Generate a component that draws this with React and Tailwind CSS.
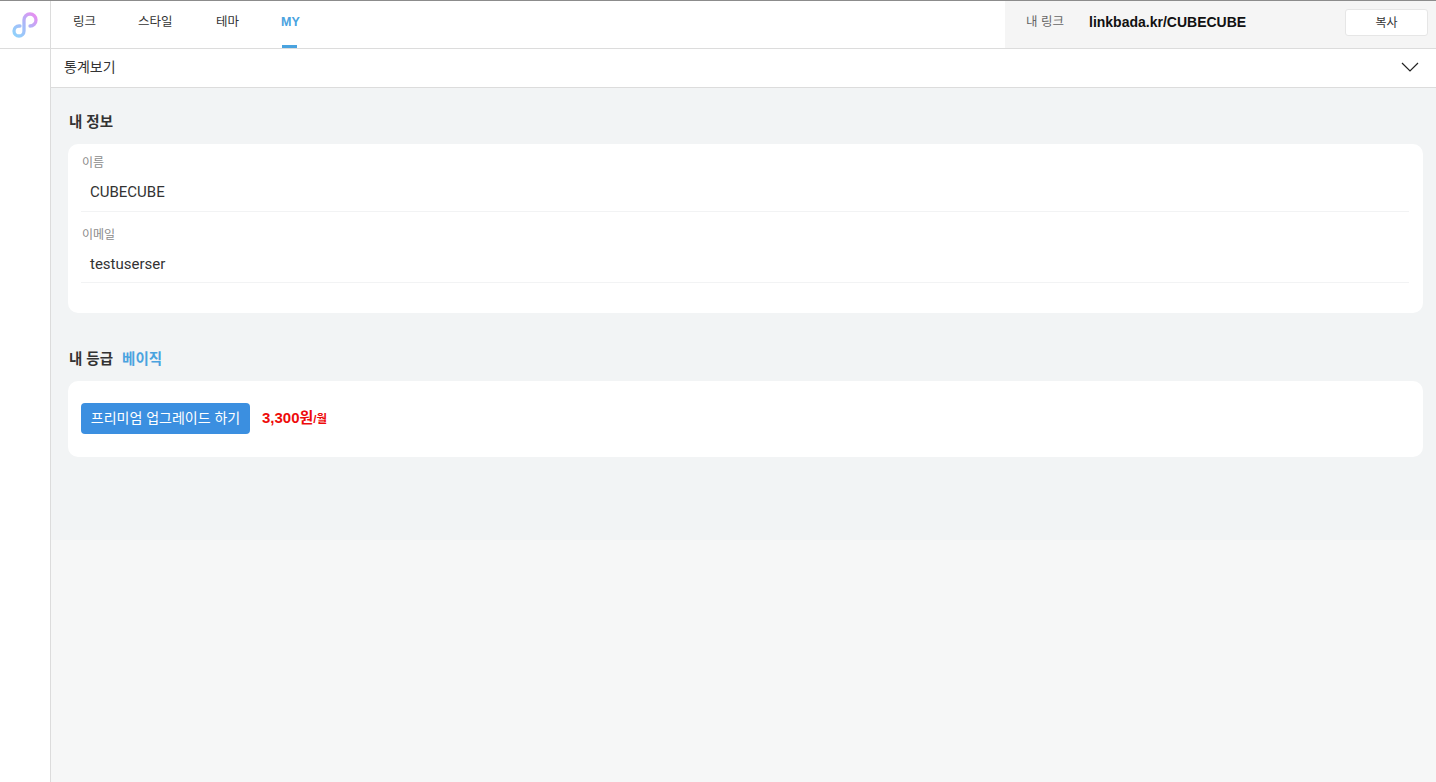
const font = { fontFamily: '"Liberation Sans", "Noto Sans CJK KR", sans-serif' };
const valueFont = { fontFamily: 'Roboto, "Noto Sans CJK KR", sans-serif' };

function Logo() {
  return (
    <svg width="30" height="30" viewBox="10 10 30 30" className="block">
      <defs>
        <linearGradient id="lg" gradientUnits="userSpaceOnUse" x1="14" y1="36" x2="36" y2="14">
          <stop offset="0" stopColor="#8fd3fb" />
          <stop offset="0.5" stopColor="#a9b8f8" />
          <stop offset="1" stopColor="#ec8cf0" />
        </linearGradient>
      </defs>
      <path
        d="M30 26 A6 6 0 1 0 24 20 L24 31 A5 5 0 1 1 19 26 L20 26"
        fill="none"
        stroke="url(#lg)"
        strokeWidth="3.3"
        strokeLinecap="round"
      />
    </svg>
  );
}

function Field({ label, value, className, boxClass }) {
  return (
    <div className={className}>
      <div className="pl-[14px] text-[12px] leading-[18px] text-[#8b8b8b]">{label}</div>
      <div
        style={valueFont}
        className={`ml-[13px] mr-[14px] border-b border-[#f2f3f4] pl-[9px] pt-[8px] text-[15px] leading-[24px] text-[#333] ${boxClass}`}
      >
        {value}
      </div>
    </div>
  );
}

export default function App() {
  return (
    <div style={font} className="flex h-screen flex-col overflow-hidden border-t border-[#8c8c8c] bg-white">
      <header className="flex h-[48px] shrink-0 border-b border-[#dcdcdc]">
        <div className="flex w-[51px] shrink-0 items-center justify-center border-r border-[#dcdcdc] pr-[1px]">
          <Logo />
        </div>
        <nav className="flex flex-1 pl-[22px] text-[12.5px] text-[#333]">
          <a className="flex w-[65px] items-start pt-[13px] leading-[16px]">링크</a>
          <a className="flex w-[78px] items-start pt-[13px] leading-[16px]">스타일</a>
          <a className="flex w-[65px] items-start pt-[13px] leading-[16px]">테마</a>
          <a className="relative flex items-start pt-[13px] font-bold leading-[16px] text-[#4aa3df]">
            MY
            <span className="absolute bottom-0 left-[1px] h-[3px] w-[15px] bg-[#4aa3df]" />
          </a>
        </nav>
        <div className="flex w-[431px] shrink-0 items-start bg-[#f5f5f5] pl-[21px] pr-[8px] pt-[8px]">
          <span className="w-[63px] pt-[5px] text-[12.5px] leading-[16px] text-[#666]">내 링크</span>
          <span className="flex-1 pt-[4px] text-[14px] font-bold leading-[18px] text-[#111]">linkbada.kr/CUBECUBE</span>
          <button className="h-[27px] w-[83px] rounded-[3px] border border-[#e6e6e6] bg-white text-[12px] text-[#333]">
            복사
          </button>
        </div>
      </header>
      <div className="flex min-h-0 flex-1">
        <aside className="w-[51px] shrink-0 border-r border-[#dcdcdc] bg-white" />
        <main className="flex min-w-0 flex-1 flex-col bg-[#f6f7f7]">
          <div className="flex h-[39px] shrink-0 items-center justify-between border-b border-[#dcdcdc] bg-white pb-[2px] pl-[13px] pr-[17px]">
            <span className="text-[14px] text-[#333]">통계보기</span>
            <svg width="18" height="10" viewBox="0 0 18 10" fill="none" stroke="#222" strokeWidth="1.2">
              <path d="M1 1 L9 9 L17 1" />
            </svg>
          </div>
          <div className="h-[452px] shrink-0 bg-[#f2f4f5] pl-[17px] pr-[13px] pt-[24px]">
            <h2 className="pl-px text-[14.5px] font-bold leading-[20px] text-[#333]">내 정보</h2>
            <section className="mt-[12px] h-[169px] rounded-[10px] bg-white pt-[10px]">
              <Field label="이름" value="CUBECUBE" boxClass="h-[40px]" />
              <Field label="이메일" value="testuserser" className="mt-[14px]" boxClass="h-[39px]" />
            </section>
            <h2 className="mt-[36px] flex gap-[9px] pl-px text-[14.5px] font-bold leading-[20px] text-[#333]">
              내 등급 <span className="text-[#4aa3df]">베이직</span>
            </h2>
            <section className="mt-[12px] flex h-[76px] items-center rounded-[10px] bg-white pb-[2px] pl-[13px]">
              <button className="h-[31px] w-[169px] rounded-[4px] bg-[#3b8fe0] text-[14px] text-white">
                프리미엄 업그레이드 하기
              </button>
              <span className="ml-[12px] text-[15px] font-bold text-[#ee0b0b]">
                3,300원<span className="text-[11.5px]">/월</span>
              </span>
            </section>
          </div>
        </main>
      </div>
    </div>
  );
}
